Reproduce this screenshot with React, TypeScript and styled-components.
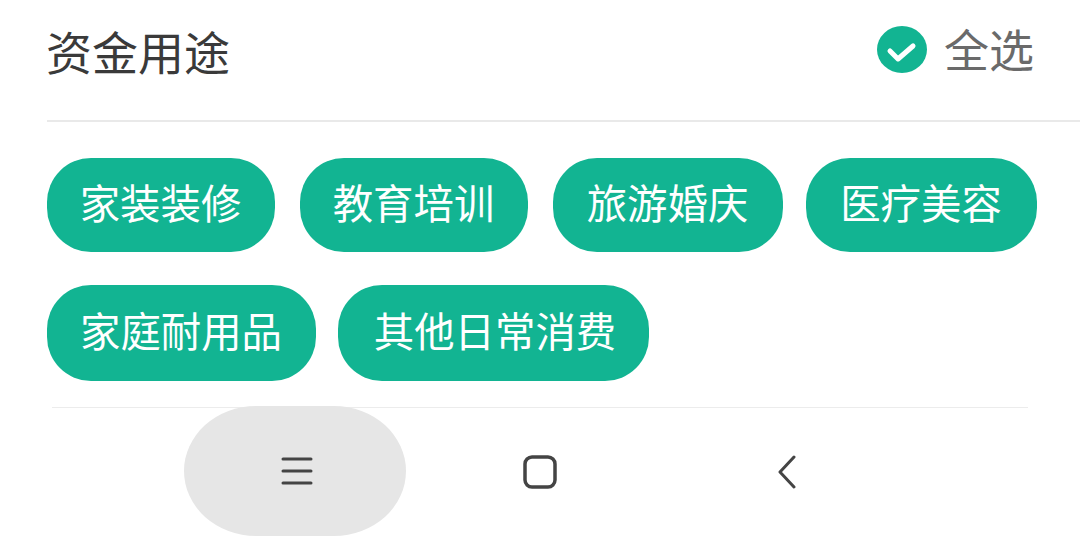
import React from "react";
import styled, { createGlobalStyle } from "styled-components";

const Global = createGlobalStyle`
  html, body { margin: 0; padding: 0; background: #fff; }
  body { width: 1080px; height: 536px; overflow: hidden; font-family: "Noto Sans CJK SC", "Noto Sans", sans-serif; }
`;

const Page = styled.div`
  width: 1080px;
  height: 536px;
  display: flex;
  flex-direction: column;
  overflow: hidden;
  background: #fff;
`;

const Header = styled.header`
  height: 120px;
  margin: 0 0 0 47px;
  border-bottom: 2px solid #e9e9e9;
  display: flex;
  align-items: center;
  justify-content: space-between;
  padding-right: 46px;
  flex: none;
  box-sizing: content-box;
`;

const Title = styled.h1`
  margin: 0 0 20px -1px;
  font-size: 46px;
  font-weight: 400;
  line-height: 1;
  color: #3a3a3a;
`;

const SelectAll = styled.div`
  display: flex;
  align-items: center;
  gap: 17px;
  margin-bottom: 21px;
`;

const SelectLabel = styled.span`
  font-size: 45px;
  line-height: 1;
  color: #6a6a6a;
  margin-bottom: 3px;
`;

const Chips = styled.section`
  flex: none;
  padding: 36px 0 0 47px;
  display: flex;
  flex-direction: column;
  gap: 33px;
`;

const ChipRow = styled.div`
  display: flex;
`;

const Chip = styled.span<{ $w: number; $h: number; $after: number; $left: number; $right: number }>`
  width: ${(p) => p.$w}px;
  height: ${(p) => p.$h}px;
  margin-right: ${(p) => p.$after}px;
  padding: 0 ${(p) => p.$right}px 6px ${(p) => p.$left}px;
  box-sizing: border-box;
  display: flex;
  align-items: center;
  justify-content: center;
  border-radius: 44px;
  background: #12b492;
  color: #fff;
  font-size: 40.4px;
  font-weight: 400;
  line-height: 1;
  white-space: nowrap;
`;

const NavBar = styled.nav`
  flex: 1;
  margin-top: 26px;
  position: relative;
  display: flex;
  padding-left: 184px;
  &::before {
    content: "";
    position: absolute;
    top: 0;
    left: 52px;
    width: 976px;
    height: 1px;
    background: #ececec;
  }
`;

const NavSlot = styled.div<{ $w: number; $active?: boolean }>`
  width: ${(p) => p.$w}px;
  height: 130px;
  display: flex;
  align-items: center;
  justify-content: center;
  border-radius: ${(p) => (p.$active ? "72px / 65px" : "0")};
  background: ${(p) => (p.$active ? "#e6e6e6" : "transparent")};
  margin-top: ${(p) => (p.$active ? "-1px" : "0")};
  position: relative;
`;

const Icon = styled.svg`
  display: block;
  fill: none;
  stroke: #444;
  stroke-linecap: round;
  stroke-linejoin: round;
`;

const MenuIcon = styled(Icon)`
  margin-left: 4px;
`;

const rowOne = [
  { t: "家装装修", w: 228, a: 25, l: 0, r: 1 },
  { t: "教育培训", w: 228, a: 25, l: 0, r: 1 },
  { t: "旅游婚庆", w: 230, a: 23, l: 0, r: 1 },
  { t: "医疗美容", w: 231, a: 0, l: 0, r: 1 },
];
const rowTwo = [
  { t: "家庭耐用品", w: 269, a: 22, l: 0, r: 1 },
  { t: "其他日常消费", w: 311, a: 0, l: 3, r: 0 },
];

export default function App() {
  return (
    <Page>
      <Global />
      <Header>
        <Title>资金用途</Title>
        <SelectAll>
          <svg width="50" height="47" viewBox="0 0 50 47">
            <ellipse cx="25" cy="23.5" rx="25" ry="23.5" fill="#12b492" />
            <path d="M13 25l8 8 15-13" fill="none" stroke="#fff" strokeWidth="5" strokeLinecap="round" strokeLinejoin="round" />
          </svg>
          <SelectLabel>全选</SelectLabel>
        </SelectAll>
      </Header>
      <Chips>
        <ChipRow>
          {rowOne.map((c) => (
            <Chip key={c.t} $w={c.w} $h={94} $after={c.a} $left={c.l} $right={c.r}>{c.t}</Chip>
          ))}
        </ChipRow>
        <ChipRow>
          {rowTwo.map((c) => (
            <Chip key={c.t} $w={c.w} $h={96} $after={c.a} $left={c.l} $right={c.r}>{c.t}</Chip>
          ))}
        </ChipRow>
      </Chips>
      <NavBar>
        <NavSlot $w={222} $active>
          <MenuIcon width="32" height="30" viewBox="0 0 32 30" strokeWidth="3">
            <path d="M2 3h28M2 15h28M2 27h28" />
          </MenuIcon>
        </NavSlot>
        <NavSlot $w={268}>
          <Icon width="34" height="34" viewBox="0 0 34 34" strokeWidth="3.5">
            <rect x="2" y="2" width="30" height="30" rx="7" />
          </Icon>
        </NavSlot>
        <NavSlot $w={226}>
          <Icon width="20" height="34" viewBox="0 0 20 34" strokeWidth="3">
            <path d="M17 2L3 17l14 15" />
          </Icon>
        </NavSlot>
      </NavBar>
    </Page>
  );
}
